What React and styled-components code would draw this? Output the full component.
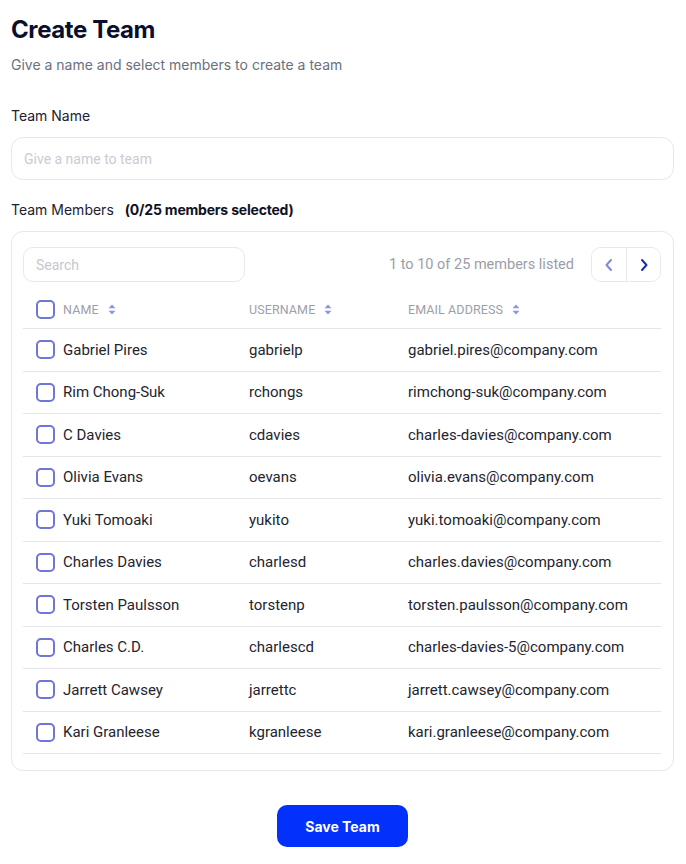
import React from "react";
import styled, { createGlobalStyle } from "styled-components";

const Global = createGlobalStyle`
  html, body { margin: 0; padding: 0; background: #ffffff; }
  body { font-family: Roboto, "Noto Sans", sans-serif; color: #1f2333; }
  * { box-sizing: border-box; }
`;

const Page = styled.div`
  padding: 14px 12px 20px 11px;
  display: flex;
  flex-direction: column;
`;

const Title = styled.h1`
  margin: 0;
  font-family: Inter, sans-serif;
  font-size: 24px;
  line-height: 32px;
  font-weight: 700;
  color: #0b0f2e;
  letter-spacing: -0.4px;
`;

const Subtitle = styled.p`
  margin: 9px 0 0;
  font-family: Inter, sans-serif;
  font-size: 14px;
  line-height: 20px;
  color: #6b7080;
`;

const Label = styled.div`
  margin-top: ${(p) => p.$mt}px;
  font-family: Inter, sans-serif;
  font-size: 14px;
  line-height: 20px;
  color: #1c2030;
  display: flex;
  gap: 11px;
`;

const Strong = styled.span`
  font-weight: 700;
  color: #0f1222;
  letter-spacing: -0.2px;
`;

const TextInput = styled.input`
  margin-top: 11px;
  height: 43px;
  width: 100%;
  border: 1px solid #e6e8ec;
  border-radius: 12px;
  padding: 0 12px;
  font-family: Roboto, sans-serif;
  font-size: 14px;
  color: #1c2030;
  outline: none;
  &::placeholder { color: #c9ccd4; }
`;

const Card = styled.div`
  margin-top: 11px;
  border: 1px solid #e6e8ec;
  border-radius: 12px;
  padding: 15px 12px 16px 11px;
`;

const Toolbar = styled.div`
  display: flex;
  align-items: center;
  justify-content: space-between;
`;

const Search = styled.input`
  width: 222px;
  height: 35px;
  border: 1px solid #e6e8ec;
  border-radius: 10px;
  padding: 0 12px;
  font-family: Roboto, sans-serif;
  font-size: 14px;
  outline: none;
  &::placeholder { color: #c4c7cf; }
`;

const PagerArea = styled.div`
  display: flex;
  align-items: center;
  gap: 17px;
`;

const PagerText = styled.span`
  font-size: 14.5px;
  color: #9a9ea8;
`;

const Pager = styled.div`
  display: flex;
  height: 35px;
  border: 1px solid #e6e8ec;
  border-radius: 10px;
  overflow: hidden;
`;

const PageBtn = styled.button`
  width: 34px;
  height: 100%;
  border: none;
  background: #fff;
  display: flex;
  align-items: center;
  justify-content: center;
  padding: 0;
  color: ${(p) => (p.$active ? "#1b2ea3" : "#7d89db")};
  & + & { border-left: 1px solid #e6e8ec; }
`;

const Row = styled.div`
  display: grid;
  grid-template-columns: 213px 159px 1fr;
  align-items: center;
  height: ${(p) => (p.$head ? 47 : 42.5)}px;
  padding-top: ${(p) => (p.$head ? 9 : 0)}px;
  border-bottom: 1px solid #e4e6ea;
`;

const Cell = styled.div`
  padding-left: 13px;
  display: flex;
  align-items: center;
  gap: 8px;
  font-size: 15px;
  color: #22252f;
  white-space: nowrap;
`;

const HeadCell = styled(Cell)`
  font-size: 12.5px;
  color: #9ca0aa;
  letter-spacing: 0.1px;
`;

const Box = styled.span`
  width: 19px;
  height: 19px;
  border: 2px solid #6f76d8;
  border-radius: 5px;
  flex: none;
`;

const SortIcon = () => (
  <svg width="8" height="11" viewBox="0 0 8 11" style={{ marginLeft: 1 }}>
    <path d="M4 0.5 L7.5 4.3 H0.5 Z" fill="#8a95e0" />
    <path d="M4 10.5 L7.5 6.7 H0.5 Z" fill="#8a95e0" />
  </svg>
);

const Chevron = ({ dir }) => (
  <svg width="12" height="14" viewBox="0 0 12 14" fill="none">
    <path
      d={dir === "left" ? "M8 2 L3.5 7 L8 12" : "M4 2 L8.5 7 L4 12"}
      stroke="currentColor"
      strokeWidth="2"
      strokeLinecap="round"
      strokeLinejoin="round"
    />
  </svg>
);

const Footer = styled.div`
  display: flex;
  justify-content: center;
  margin-top: 34px;
`;

const SaveBtn = styled.button`
  width: 131px;
  height: 42px;
  border: none;
  border-radius: 10px;
  background: #0330fb;
  color: #fff;
  font-family: Inter, sans-serif;
  font-weight: 700;
  font-size: 14px;
`;

const members = [
  ["Gabriel Pires", "gabrielp", "gabriel.pires@company.com"],
  ["Rim Chong-Suk", "rchongs", "rimchong-suk@company.com"],
  ["C Davies", "cdavies", "charles-davies@company.com"],
  ["Olivia Evans", "oevans", "olivia.evans@company.com"],
  ["Yuki Tomoaki", "yukito", "yuki.tomoaki@company.com"],
  ["Charles Davies", "charlesd", "charles.davies@company.com"],
  ["Torsten Paulsson", "torstenp", "torsten.paulsson@company.com"],
  ["Charles C.D.", "charlescd", "charles-davies-5@company.com"],
  ["Jarrett Cawsey", "jarrettc", "jarrett.cawsey@company.com"],
  ["Kari Granleese", "kgranleese", "kari.granleese@company.com"],
];

export default function App() {
  return (
    <>
      <Global />
      <Page>
        <Title>Create Team</Title>
        <Subtitle>Give a name and select members to create a team</Subtitle>
        <Label $mt={31}>Team Name</Label>
        <TextInput placeholder="Give a name to team" />
        <Label $mt={20}>
          <span>Team Members</span>
          <Strong>(0/25 members selected)</Strong>
        </Label>
        <Card>
          <Toolbar>
            <Search placeholder="Search" />
            <PagerArea>
              <PagerText>1 to 10 of 25 members listed</PagerText>
              <Pager>
                <PageBtn><Chevron dir="left" /></PageBtn>
                <PageBtn $active><Chevron dir="right" /></PageBtn>
              </Pager>
            </PagerArea>
          </Toolbar>
          <Row $head>
            <HeadCell><Box />NAME <SortIcon /></HeadCell>
            <HeadCell>USERNAME <SortIcon /></HeadCell>
            <HeadCell>EMAIL ADDRESS <SortIcon /></HeadCell>
          </Row>
          {members.map(([n, u, e]) => (
            <Row key={u}>
              <Cell><Box />{n}</Cell>
              <Cell>{u}</Cell>
              <Cell>{e}</Cell>
            </Row>
          ))}
        </Card>
        <Footer>
          <SaveBtn>Save Team</SaveBtn>
        </Footer>
      </Page>
    </>
  );
}
